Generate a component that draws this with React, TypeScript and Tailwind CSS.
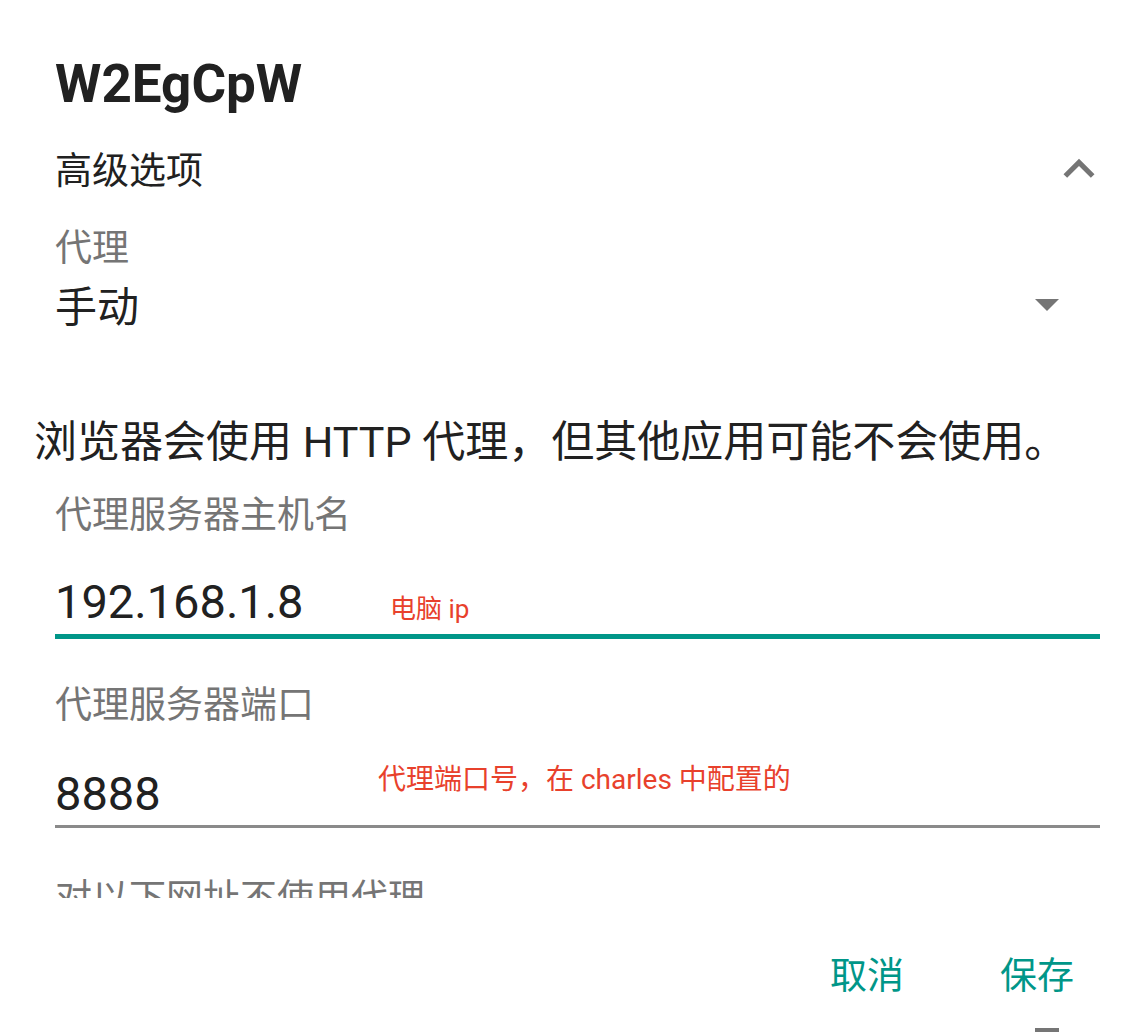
import React from "react";

export default function App() {
  return (
    <div
      className="relative w-[1130px] h-[1032px] bg-white overflow-hidden text-[#212121]"
      style={{ fontFamily: '"Roboto", "Noto Sans CJK SC", sans-serif' }}
    >
      <div className="h-[898px] overflow-hidden">
        <div className="mt-[52px] h-[64px] leading-[64px] text-[53px] font-bold pl-[55px] whitespace-nowrap">
          W2EgCpW
        </div>

        <div className="mt-[24px] h-[64px] flex items-center justify-between pl-[55px] pr-[20px]">
          <span className="text-[37px] leading-[64px]">高级选项</span>
          <svg width="62" height="62" viewBox="0 0 24 24" className="mb-[6px]" fill="#757575">
            <path d="M12 8l-6 6 1.41 1.41L12 10.83l4.59 4.58L18 14z" />
          </svg>
        </div>

        <div className="mt-[23px] h-[44px] leading-[44px] text-[37px] text-[#757575] pl-[55px]">
          代理
        </div>

        <div className="mt-[11px] h-[52px] flex items-center justify-between pl-[55px] pr-[71px]">
          <span className="text-[42px] leading-[52px]">手动</span>
          <svg width="24" height="12" viewBox="0 0 24 12" className="mb-[7px]">
            <polygon points="0,0 24,0 12,12" fill="#757575" />
          </svg>
        </div>

        <div className="mt-[80px] h-[56px] leading-[56px] text-[43px] pl-[34px] whitespace-nowrap">
          浏览器会使用 HTTP 代理，但其他应用可能不会使用。
        </div>

        <div className="mt-[24px] h-[44px] leading-[44px] text-[37px] text-[#757575] pl-[55px]">
          代理服务器主机名
        </div>

        <div className="mt-[36px] h-[56px] flex items-baseline pl-[55px]">
          <span className="w-[335px] shrink-0 text-[47px] leading-[56px]">192.168.1.8</span>
          <span className="text-[26px] leading-[28px] text-[#e8412c] whitespace-nowrap">电脑 ip</span>
        </div>
        <div className="mt-[4px] h-[5px] ml-[55px] mr-[30px] bg-[#009688]" />

        <div className="mt-[45px] h-[44px] leading-[44px] text-[37px] text-[#757575] pl-[55px]">
          代理服务器端口
        </div>

        <div className="relative mt-[38px] h-[56px] pl-[55px]">
          <span className="text-[47px] leading-[56px]">8888</span>
          <span className="absolute left-[378px] top-0 text-[28px] leading-[28px] text-[#e8412c] whitespace-nowrap">
            代理端口号，在 charles 中配置的
          </span>
        </div>
        <div className="mt-[3px] h-[3px] ml-[55px] mr-[30px] bg-[#8a8a8a]" />

        <div className="mt-[49px] h-[44px] leading-[44px] text-[37px] text-[#757575] pl-[55px] whitespace-nowrap">
          对以下网址不使用代理
        </div>
      </div>

      <div className="mt-[57px] flex justify-end gap-[96px] pr-[56px]">
        <span className="text-[37px] leading-[44px] text-[#009688]">取消</span>
        <span className="text-[37px] leading-[44px] text-[#009688]">保存</span>
      </div>

      <div className="absolute left-[1035px] top-[1028px] w-[24px] h-[4px] bg-[#757575]" />
    </div>
  );
}
